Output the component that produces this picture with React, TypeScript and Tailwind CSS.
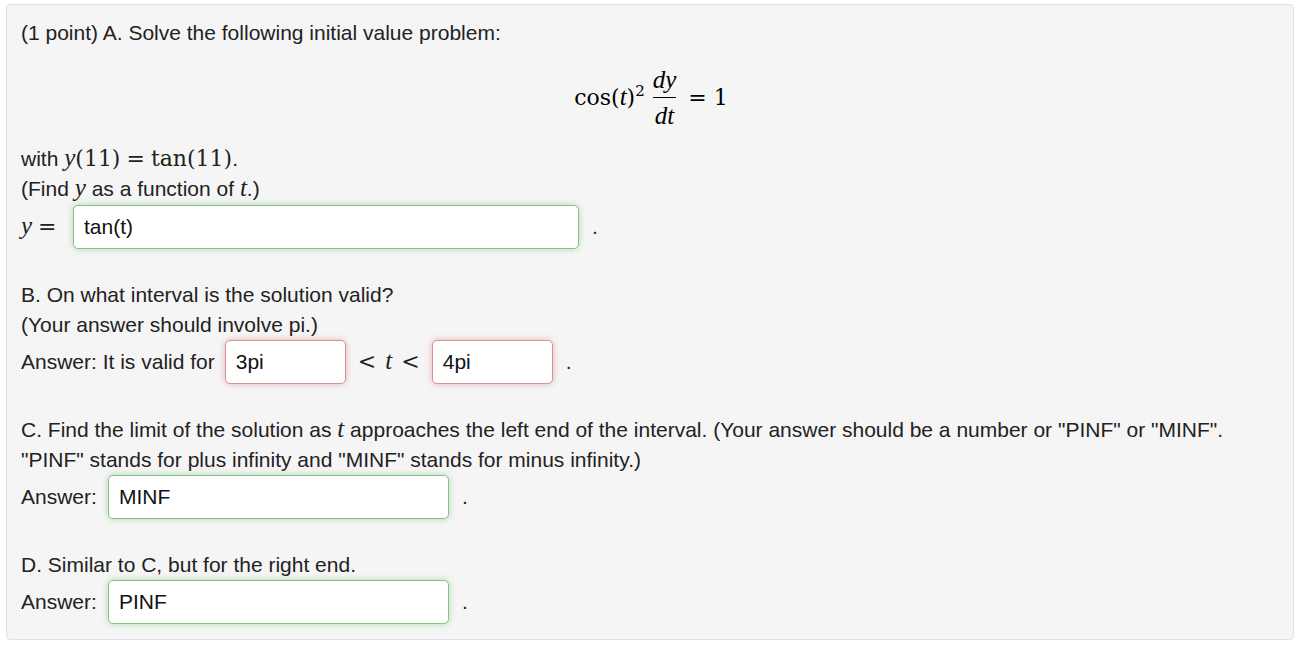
import React from 'react';

// Problem panel — initial value problem with answer blanks

const sans = "font-['Liberation_Sans',Arial,sans-serif]";
const serif = "font-['DejaVu_Serif','Liberation_Serif',serif]";
const ital = "font-['Liberation_Serif','Times_New_Roman',serif] italic text-[25px] leading-none";

function M({ children }: { children: React.ReactNode }) {
  return <span className={`${serif} text-[22px] leading-none`}>{children}</span>;
}

function V({ children }: { children: React.ReactNode }) {
  return <span className={ital}>{children}</span>;
}

function Eq() {
  return <span className="mx-[6px]">=</span>;
}

function Blank({ value, width, ok }: { value: string; width: string; ok: boolean }) {
  const tone = ok
    ? 'border-[#85c285] shadow-[0_0_6px_rgba(92,184,92,0.45)]'
    : 'border-[#dc8f8f] shadow-[0_0_6px_rgba(217,83,79,0.4)]';
  return (
    <div className={`${width} h-[44px] flex items-center pl-[10px] bg-white border rounded-[5px] text-[21px] text-[#111] ${tone}`}>
      {value}
    </div>
  );
}

export default function App() {
  return (
    <div className={`bg-white min-h-[651px] pt-[4px] pl-[6px] ${sans} text-[21px] text-[#222]`}>
      <div className="w-[1288px] h-[636px] bg-[#f5f5f5] border border-[#e0e0e0] rounded-[4px] pl-[14px] pt-[13px] leading-[30px]">
        <div>(1 point) A. Solve the following initial value problem:</div>

        {/* display equation */}
        <div className="h-[96px] flex items-center justify-center pr-[12px] pt-[3px]">
          <div className={`${serif} text-[22px] text-black flex items-center`}>
            <span>cos(<V>t</V>)</span>
            <sup className="text-[15px] relative -top-[7px] mr-[6px]">2</sup>
            <span className="flex flex-col items-center mx-[2px]">
              <V>dy</V>
              <span className="w-full h-px bg-black my-[5px]" />
              <V>dt</V>
            </span>
            <span className="ml-[10px]">= 1</span>
          </div>
        </div>

        <div>
          with <M><V>y</V>(11)<Eq />tan(11)</M>.
        </div>
        <div>
          (Find <V>y</V> as a function of <V>t</V>.)
        </div>
        <div className="flex items-center h-[46px]">
          <span className="w-[52px]"><M><V>y</V><Eq /></M></span>
          <Blank value="tan(t)" width="w-[506px]" ok />
          <span className="ml-[13px]">.</span>
        </div>

        <div className="mt-[30px]">B. On what interval is the solution valid?</div>
        <div>(Your answer should involve pi.)</div>
        <div className="flex items-center h-[44px]">
          <span className="mr-[10px]">Answer: It is valid for</span>
          <Blank value="3pi" width="w-[121px]" ok={false} />
          <span className="w-[86px] text-center">
            <M>&lt;<span className="mx-[9px]"><V>t</V></span>&lt;</M>
          </span>
          <Blank value="4pi" width="w-[121px]" ok={false} />
          <span className="ml-[13px]">.</span>
        </div>

        <div className="mt-[31px]">
          C. Find the limit of the solution as <V>t</V> approaches the left end of the interval. (Your answer should be a number or "PINF" or "MINF".
        </div>
        <div>"PINF" stands for plus infinity and "MINF" stands for minus infinity.)</div>
        <div className="flex items-center h-[44px]">
          <span className="w-[87px]">Answer:</span>
          <Blank value="MINF" width="w-[341px]" ok />
          <span className="ml-[13px]">.</span>
        </div>

        <div className="mt-[31px]">D. Similar to C, but for the right end.</div>
        <div className="flex items-center h-[44px]">
          <span className="w-[87px]">Answer:</span>
          <Blank value="PINF" width="w-[341px]" ok />
          <span className="ml-[13px]">.</span>
        </div>
      </div>
    </div>
  );
}
